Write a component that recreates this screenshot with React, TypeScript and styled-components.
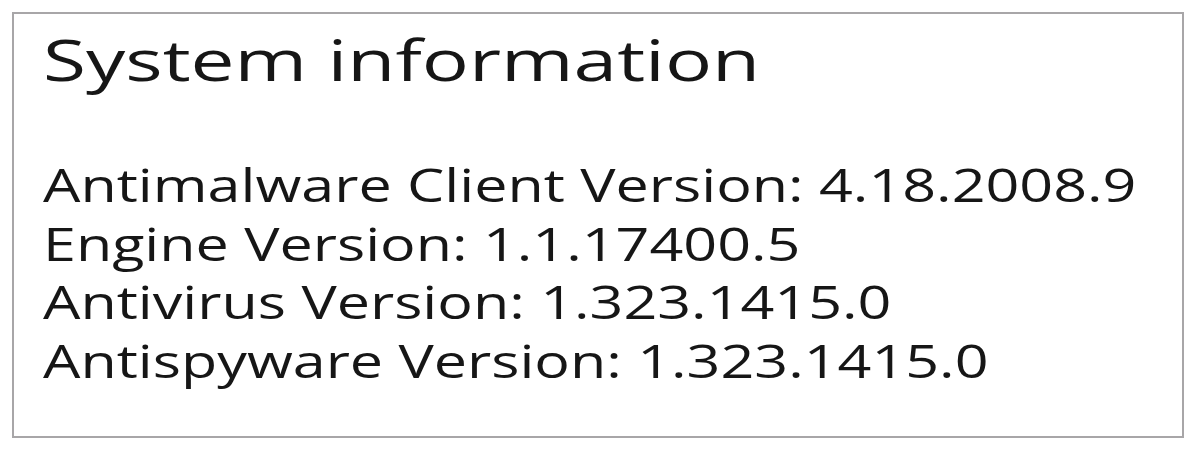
import React from "react";
import styled, { createGlobalStyle } from "styled-components";

const Global = createGlobalStyle`
  html, body { margin: 0; padding: 0; background: #ffffff; }
  body { font-family: "Open Sans", "Noto Sans", sans-serif; color: #161616; }
`;

const Page = styled.div`
  padding: 12px 0 0 12px;
`;

const Panel = styled.section`
  box-sizing: border-box;
  width: 1172px;
  height: 426px;
  border: 2px solid #a8a6a8;
  padding: 7px 0 0 29px;
  display: flex;
  flex-direction: column;
  align-items: flex-start;
  overflow: hidden;
`;

const Stretch = styled.div<{ $scale: number }>`
  width: fit-content;
  transform: scaleX(${(p) => p.$scale});
  transform-origin: left top;
  white-space: nowrap;
`;

const Title = styled.h1`
  margin: 0;
  font-weight: 400;
  font-size: 56px;
  line-height: 76px;
  color: #161616;
`;

const InfoList = styled.div`
  margin-top: 58px;
  display: flex;
  flex-direction: column;
`;

const InfoLine = styled.div`
  font-size: 46px;
  line-height: 58.5px;
  color: #161616;
`;

const lines = [
  "Antimalware Client Version: 4.18.2008.9",
  "Engine Version: 1.1.17400.5",
  "Antivirus Version: 1.323.1415.0",
  "Antispyware Version: 1.323.1415.0",
];

export default function App() {
  return (
    <>
      <Global />
      <Page>
        <Panel>
          <Stretch $scale={1.4}>
            <Title>System information</Title>
          </Stretch>
          <InfoList>
            <Stretch $scale={1.287}>
              {lines.map((l) => (
                <InfoLine key={l}>{l}</InfoLine>
              ))}
            </Stretch>
          </InfoList>
        </Panel>
      </Page>
    </>
  );
}
